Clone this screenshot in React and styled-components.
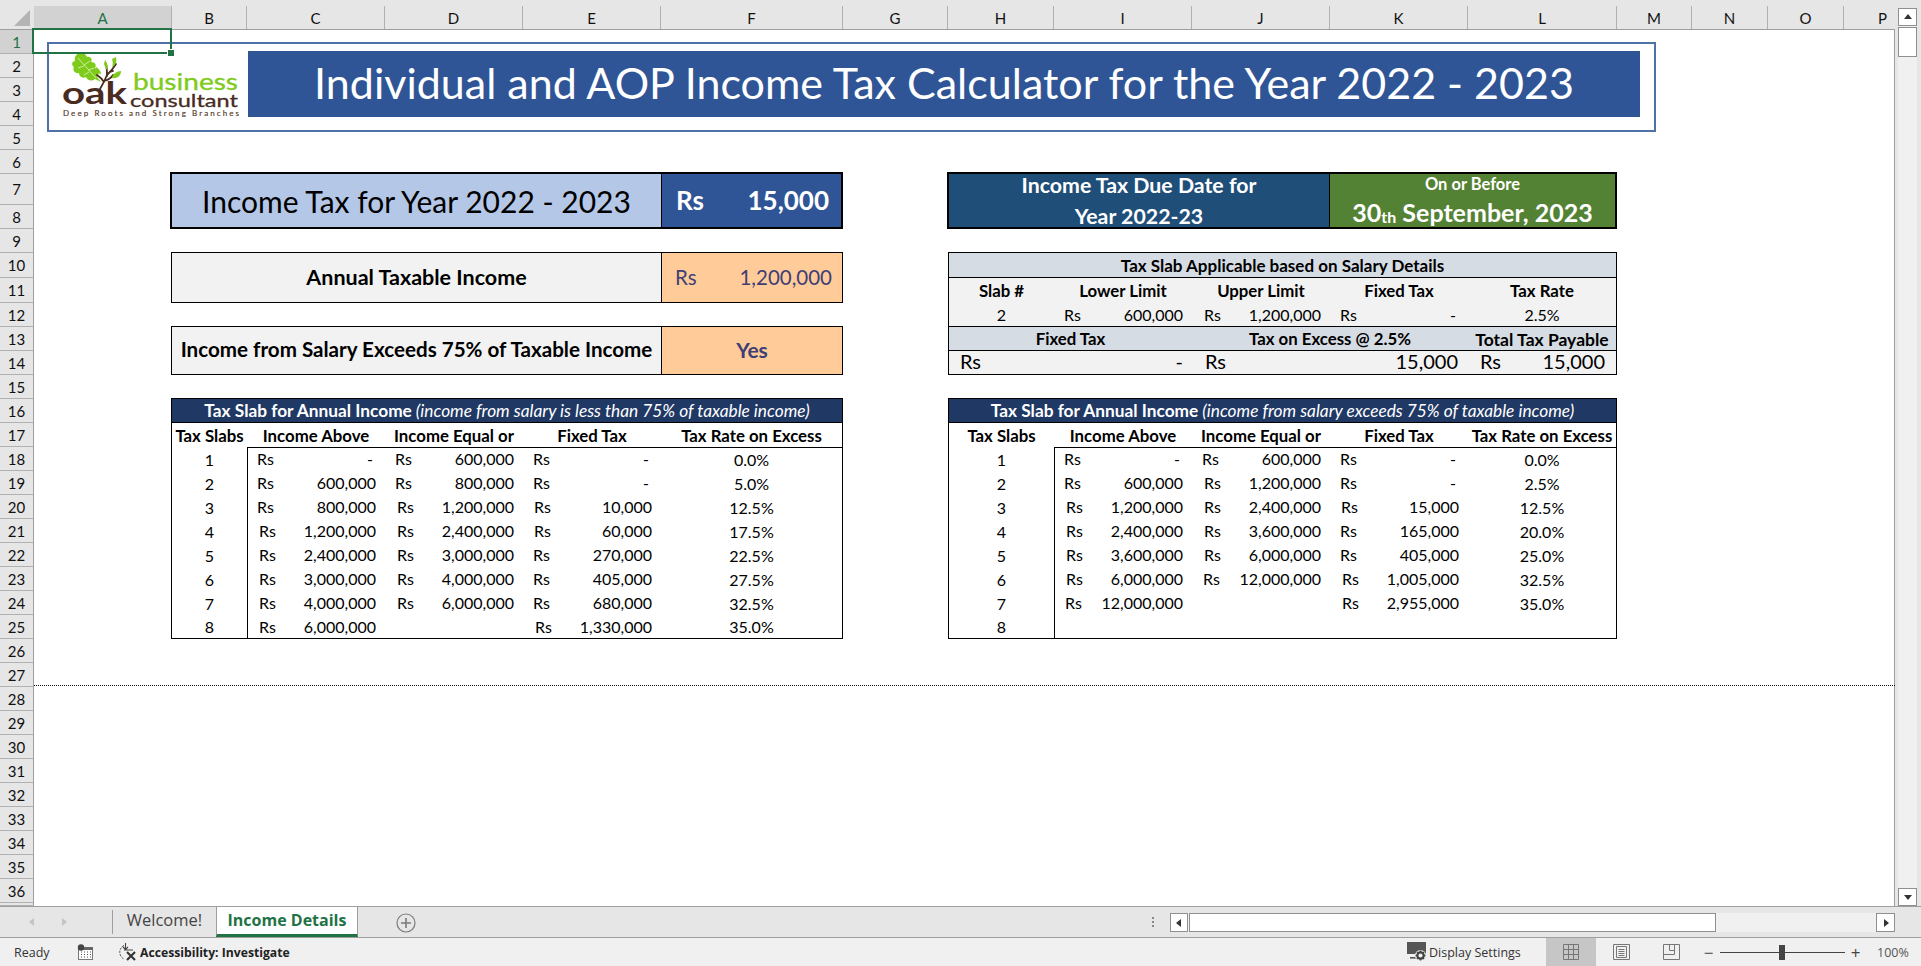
import React from "react";
import styled, { createGlobalStyle } from "styled-components";

const GlobalStyle = createGlobalStyle`
  html, body { margin: 0; padding: 0; background: #fff; overflow: hidden; }
  #root { width: 1921px; height: 966px; }
  * { box-sizing: border-box; }
`;

const cellFont = `Lato, "Liberation Sans", sans-serif`;
const uiFont = `"Open Sans", "Noto Sans", sans-serif`;

const Window = styled.div`
  width: 1921px; height: 966px; display: flex; flex-direction: column;
  font-family: ${cellFont}; color: #000; overflow: hidden; background: #fff;
`;
const Main = styled.div`display: flex; height: 906px;`;

const Sheet = styled.div`
  display: grid; width: 1895px; height: 906px; background: #fff;
  border-right: 1px solid #9e9e9e;
  grid-template-columns: 34px 138px 75px 138px 138px 138px 182px 105px 106px 138px 138px 138px 149px 75px 76px 76px 51px;
  grid-template-rows: 30px repeat(6, 24px) 31px 24px 24px 25px 25px 24px 24px 24px 24px 24px 24px repeat(8, 24px) 24px 24px repeat(9, 24px) 3px;
`;
const HeaderBand = styled.div`
  grid-column: 1 / -1; grid-row: 1; background: #e6e6e6; border-bottom: 1px solid #9e9e9e;
`;
const Corner = styled.div`
  grid-column: 1; grid-row: 1; width: 16px; height: 16px; margin: 10px 0 0 14px;
  background: #b4b4b4; clip-path: polygon(100% 0, 100% 100%, 0 100%);
`;
const ColHead = styled.div`
  grid-column: ${p => p.$col}; grid-row: 1; margin-top: 6px; height: 23px;
  display: flex; align-items: center; justify-content: center;
  font-size: 15px; padding: 1px 0 0 ${p => (p.$last ? 27 : 0)}px;
  background: ${p => (p.$active ? "#d2d2d2" : "transparent")};
  color: ${p => (p.$active ? "#217346" : "#111")};
  border-right: 1px solid ${p => (p.$last ? "transparent" : "#b1b1b1")};
`;
const RowHead = styled.div`
  grid-column: 1; grid-row: ${p => p.$row}; display: flex; align-items: center; justify-content: center;
  font-size: 15px; overflow: hidden;
  background: ${p => (p.$active ? "#d2d2d2" : "#e6e6e6")};
  color: ${p => (p.$active ? "#217346" : "#111")};
  border-right: 1px solid #9e9e9e; border-bottom: 1px solid #b1b1b1;
`;
const Selection = styled.div`
  grid-column: 2; grid-row: 2; margin: -2px 0 0 -2px; border: 2px solid #217346;
  position: relative; z-index: 5;
`;
const Handle = styled.span`
  position: absolute; right: -4px; bottom: -4px; width: 6px; height: 6px;
  background: #217346; outline: 1px solid #fff;
`;
const PageBreak = styled.div`
  grid-column: 2 / -1; grid-row: 28; margin-bottom: 1px; border-bottom: 1px dotted #111;
`;

const TitleFrame = styled.div`
  grid-column: 2 / 15; grid-row: 2 / 7; margin: 12px 36px 18px 13px;
  border: 2px solid #4f71a9; padding: 7px 14px 13px 11px; background: #fff;
  display: flex; gap: 8px;
`;
const Banner = styled.div`
  flex: 1; background: #2f5597; color: #fff; display: flex; align-items: center; justify-content: center;
  font-size: 43px; padding-bottom: 3px;
`;

const Box = styled.div`
  grid-column: ${p => p.$col}; grid-row: ${p => p.$row};
  display: grid; grid-template-columns: ${p => p.$cols}; grid-template-rows: minmax(0, 1fr);
  border: ${p => (p.$thick ? "2px" : "1px")} solid #000;
  margin: ${p => p.$margin};
  z-index: 1; overflow: hidden;
`;
const Cell = styled.div`
  display: flex; align-items: center; justify-content: ${p => p.$justify || "center"};
  background: ${p => p.$bg}; color: ${p => p.$color || "#000"};
  font-size: ${p => p.$size}px; font-weight: ${p => (p.$bold ? 700 : 400)};
  padding: ${p => p.$pad || "0 0 2px"}; min-width: 0; white-space: nowrap;
  border-left: ${p => (p.$divider ? "1px solid #000" : "none")};
`;
const DueCell = styled.div`
  display: flex; flex-direction: column; align-items: center; justify-content: center;
  background: ${p => p.$bg}; color: #fff; font-weight: 700; white-space: nowrap; min-height: 0;
  padding-top: ${p => p.$top || 0}px;
  border-left: ${p => (p.$divider ? "1px solid #000" : "none")};
`;
const DueLine = styled.div`font-size: ${p => p.$size}px; line-height: ${p => p.$line}px; flex: none;`;
const Ordinal = styled.span`font-size: 16px; vertical-align: -1px;`;

const Panel = styled.div`
  grid-column: 9 / 14; grid-row: 11 / 16; margin: -1px 0 0 0; border: 1px solid #000;
  background: #f2f2f2; display: grid; overflow: hidden;
  grid-template-columns: 105px 138px 138px 138px 1fr;
  grid-template-rows: 25px 25px 24px 24px 23px;
`;
const PanelTitle = styled.div`
  grid-column: 1 / -1; background: #d6dce4; border-bottom: 1px solid #000;
  display: flex; align-items: center; justify-content: center; font-size: 17px; font-weight: 700;
`;
const PanelHead = styled.div`
  display: flex; align-items: center; justify-content: center; white-space: nowrap;
  font-size: ${p => p.$size || 16.8}px; font-weight: 700;
  grid-column: ${p => (p.$span ? `span ${p.$span}` : "auto")};
  ${p => p.$band && "background: #d6dce4; border-bottom: 1px solid #000;"}
  ${p => p.$low && "padding-top: 2px;"}
`;
const Plain = styled.div`
  display: flex; align-items: center; justify-content: center; font-size: 16px;
  ${p => p.$under && "border-bottom: 1px solid #000;"}
`;
const Money = styled.div`
  display: flex; align-items: center; justify-content: space-between; min-width: 0;
  font-size: ${p => p.$size || 16}px;
  grid-column: ${p => (p.$span ? `span ${p.$span}` : "auto")};
  padding: ${p => p.$pad || "0 9px 0 10px"};
  ${p => p.$under && "border-bottom: 1px solid #000;"}
`;
const Dash = styled.span`padding-right: 3px;`;

const SlabTable = styled.div`
  grid-column: ${p => p.$col}; grid-row: 17 / 27; margin: ${p => p.$margin}; border: 1px solid #000;
  display: grid; overflow: hidden; z-index: 1;
  grid-template-columns: ${p => p.$first}px 138px 138px 138px 1fr;
  grid-template-rows: 24px 24px repeat(7, 24px) 23px;
`;
const TableTitle = styled.div`
  grid-column: 1 / -1; background: #203864; color: #fff; border-bottom: 1px solid #000;
  display: flex; align-items: center; justify-content: center; gap: 4px; font-size: 17.3px; white-space: nowrap;
`;
const Strong = styled.b`font-weight: 700;`;
const Aside = styled.i`font-style: italic;`;
const ColTitle = styled.div`
  display: flex; align-items: center; justify-content: center; font-size: 16.8px; font-weight: 700; white-space: nowrap;
`;
const SlabColumn = styled.div`
  grid-column: 1; grid-row: 3 / -1; display: grid; grid-template-rows: subgrid;
`;
const SlabBody = styled.div`
  grid-column: 2 / -1; grid-row: 3 / -1; display: grid;
  grid-template-columns: subgrid; grid-template-rows: subgrid;
  box-shadow: inset 1px 1px 0 #000;
`;

/* workbook chrome */
const VScroll = styled.div`
  width: 26px; height: 906px; background: #e6e6e6; padding: 8px 4px 0 3px; display: flex;
`;
const VTrack = styled.div`
  flex: 1; background: #f0f0f0; display: flex; flex-direction: column;
`;
const ScrollBtn = styled.div`
  width: ${p => p.$w}px; height: ${p => p.$h}px; background: #fff; border: 1px solid #8f8f8f;
  display: flex; align-items: center; justify-content: center; flex: none;
`;
const VThumb = styled.div`
  width: 100%; height: 30px; margin-top: 1px; background: #fff; border: 1px solid #8f8f8f;
`;
const VGap = styled.div`flex: 1;`;

const TabBar = styled.div`
  height: 32px; background: #e6e6e6; border-top: 1px solid #9e9e9e; border-bottom: 1px solid #9e9e9e;
  display: flex; align-items: stretch; font-family: ${uiFont};
`;
const NavArrows = styled.div`
  width: 113px; display: flex; align-items: center; gap: 24px; padding-left: 28px;
  position: relative;
  &::after { content: ""; position: absolute; right: 0; top: 3px; bottom: 3px; width: 1px; background: #9e9e9e; }
`;
const TabItem = styled.div`
  display: flex; align-items: center; justify-content: center; white-space: nowrap;
  width: ${p => p.$w}px; font-size: ${p => (p.$active ? 16 : 16.5)}px; margin-top: -1px;
  padding-bottom: ${p => (p.$active ? 1 : 5)}px;
  font-weight: ${p => (p.$active ? 700 : 400)};
  color: ${p => (p.$active ? "#217346" : "#444")};
  background: ${p => (p.$active ? "#fff" : "transparent")};
  border-left: ${p => (p.$active ? "1px solid #9e9e9e" : "0")};
  border-right: ${p => (p.$active ? "1px solid #9e9e9e" : "0")};
  border-top: ${p => (p.$active ? "1px solid #9e9e9e" : "0")};
  border-bottom: ${p => (p.$active ? "3px solid #217346" : "0")};
`;
const AddSheet = styled.div`
  margin: 6px 0 0 38px; width: 20px; height: 20px; color: #777;
`;
const TabGap = styled.div`flex: 1;`;
const SplitDots = styled.div`
  width: 20px; margin-right: 7px; display: flex; flex-direction: column; align-items: center; justify-content: center; gap: 2px;
`;
const Dot = styled.span`width: 2px; height: 2px; background: #8a8a8a;`;
const HScroll = styled.div`
  width: 725px; height: 19px; margin: 6px 26px 0 0; display: flex; background: #f0f0f0;
`;
const HThumb = styled.div`
  width: 527px; background: #fff; border: 1px solid #8f8f8f; margin-left: 1px;
`;

const StatusBar = styled.div`
  height: 28px; background: #f0f0f0; display: flex; align-items: center;
  font-family: ${uiFont}; font-size: 12.5px; color: #333;
`;
const Ready = styled.span`margin-left: 14px; width: 63px;`;
const StatusIcon = styled.span`display: flex; align-items: center; margin-right: ${p => p.$gap || 0}px;`;
const A11y = styled.b`font-weight: 700; color: #222; margin-left: 3px; font-size: 12.2px;`;
const StatusGap = styled.div`flex: 1;`;
const DisplaySettings = styled.span`margin: 0 25px 0 2px; width: 92px; white-space: nowrap;`;
const ViewBtn = styled.div`
  width: 50px; height: 28px; display: flex; align-items: center; justify-content: center;
  background: ${p => (p.$active ? "#c6c6c6" : "transparent")};
`;
const Zoomer = styled.div`
  display: flex; align-items: center; margin-left: 7px; width: 158px; color: #555;
`;
const Sign = styled.span`font-size: 17px; width: 11px; text-align: center; line-height: 1; color: #444;`;
const SliderTrack = styled.div`
  flex: 1; height: 1px; background: #444; margin: 0 5px 0 6px; position: relative;
`;
const SliderThumb = styled.span`
  position: absolute; left: 59px; top: -7px; width: 6px; height: 15px; background: #444;
`;
const Percent = styled.span`width: 44px; margin-left: 16px; color: #555;`;

const LEAF = "#7ecb1c";
const BARK = "#4a2b1f";

const Logo = () => (
  <svg width="180" height="68" viewBox="0 0 180 68" style={{ flex: "none" }}>
    <path d="M20 2C24 1 26 4 27 6C30 5 33 8 31 11C35 11 37 14 35 17C39 19 40 23 37 26L41 31L35 28C31 31 27 29 26 26C22 28 19 25 19 22C15 23 12 19 14 16C11 14 12 10 15 10C14 6 16 3 20 2Z" fill={LEAF} />
    <path d="M18 7L36 27M24 14L30 10M28 19L34 17M24 15L18 17M29 21L24 24" stroke="#d6f2a8" strokeWidth="0.9" fill="none" />
    <g fontFamily="Lato, sans-serif">
      <text x="2" y="53" fontSize="31" fontWeight="700" fill={BARK} textLength="65" lengthAdjust="spacingAndGlyphs">oak</text>
      <text x="73" y="39" fontSize="23" fill={LEAF} stroke={LEAF} strokeWidth="0.3" textLength="105" lengthAdjust="spacingAndGlyphs">business</text>
      <text x="70" y="56" fontSize="18" fill={BARK} stroke={BARK} strokeWidth="0.3" textLength="108" lengthAdjust="spacingAndGlyphs">consultant</text>
      <text x="3" y="65" fontSize="8" fill="#54372a" stroke="#54372a" strokeWidth="0.15" textLength="176">Deep Roots and Strong Branches</text>
    </g>
    <path d="M40 38C43 33 45 29 47 24M47 24C50 21 53 18 56 13M47 25C47 21 47 17 46 13M44 31C42 28 40 26 37 24M44 30C48 29 51 27 53 24M50 21L53 20" stroke={BARK} strokeWidth="1.8" fill="none" strokeLinecap="round" />
    <path d="M44 13C45 16 46 18 47 19C48 16 48 13 45 9Z" fill={LEAF} />
    <path d="M52 8C53 11 53 14 52 16C56 14 57 11 56 6Z" fill={LEAF} />
    <path d="M52 27C52 24 56 20 61 20C61 25 57 28 52 27Z" fill={LEAF} />
    <path d="M36 16C38 17 41 20 41 23C38 23 36 20 36 16Z" fill={LEAF} />
  </svg>
);

const Triangle = ({ dir, color = "#333", size = 8 }) => {
  const pts = { up: "0,6 4,1 8,6", down: "0,2 8,2 4,7", left: "6,0 6,8 1,4", right: "2,0 2,8 7,4" }[dir];
  return (
    <svg width={size} height={size} viewBox="0 0 8 8"><polygon points={pts} fill={color} /></svg>
  );
};

const AddIcon = () => (
  <svg width="20" height="20" viewBox="0 0 20 20" fill="none" stroke="#7a7a7a" strokeWidth="1.2">
    <circle cx="10" cy="10" r="9" />
    <path d="M10 5v10M5 10h10" strokeWidth="1.6" />
  </svg>
);
const MacroIcon = () => (
  <svg width="16" height="16" viewBox="0 0 16 16">
    <rect x="1.5" y="3.5" width="14" height="12" fill="#fff" stroke="#777" />
    <rect x="1" y="3" width="15" height="3" fill="#666" />
    <circle cx="4" cy="3.5" r="3.2" fill="#444" />
    <path d="M4 8h1M7 8h1M10 8h1M13 8h1M4 10.5h1M7 10.5h1M10 10.5h1M13 10.5h1M4 13h1M7 13h1M10 13h1M13 13h1" stroke="#555" />
  </svg>
);
const AccessibilityIcon = () => (
  <svg width="20" height="20" viewBox="0 0 20 20" fill="none" stroke="#444">
    <path d="M7 3.5A7.5 7.5 0 0 0 7 17" strokeDasharray="2.2 1.2" />
    <path d="M8.5 1v6M6 5l2.5 2.5L11 5M7 8h9" strokeWidth="1.1" />
    <path d="M10 10l8 8M18 10l-8 8" stroke="#333" strokeWidth="2.1" />
  </svg>
);
const DisplayIcon = () => (
  <svg width="20" height="20" viewBox="0 0 20 20">
    <rect x="0" y="0" width="19" height="12" fill="#555" />
    <rect x="3" y="15" width="7" height="1.6" fill="#555" />
    <circle cx="13.5" cy="13.5" r="5.5" fill="#f0f0f0" />
    <circle cx="13.5" cy="13.5" r="3.2" fill="none" stroke="#444" strokeWidth="2.2" />
    <path d="M13.5 8.5v2M13.5 16.5v2M8.5 13.5h2M16.5 13.5h2M10 10l1.4 1.4M15.6 15.6L17 17M17 10l-1.4 1.4M11.4 15.6L10 17" stroke="#444" strokeWidth="1.6" />
  </svg>
);
const GridViewIcon = () => (
  <svg width="16" height="16" viewBox="0 0 16 16" fill="none" stroke="#767676">
    <path d="M.5.5h15v15H.5zM.5 5.5h15M.5 10.5h15M5.5.5v15M10.5.5v15" />
  </svg>
);
const PageIcon = () => (
  <svg width="17" height="16" viewBox="0 0 17 16" fill="none" stroke="#767676">
    <path d="M.5.5h16v15H.5zM3.5 2.5h10v11h-10z" />
    <path d="M5.5 5.5h6M5.5 7.5h6M5.5 9.5h6M5.5 11.5h6" />
  </svg>
);
const BreakIcon = () => (
  <svg width="17" height="16" viewBox="0 0 17 16" fill="none" stroke="#767676">
    <path d="M.5.5h16v15H.5zM.5 10.5h11V.5M6.5.5v6h5" />
  </svg>
);

const COLS = ["A","B","C","D","E","F","G","H","I","J","K","L","M","N","O","P"];
const ROW_COUNT = 37;

const LEFT_ROWS = [
  ["-", "600,000", "-", "0.0%"],
  ["600,000", "800,000", "-", "5.0%"],
  ["800,000", "1,200,000", "10,000", "12.5%"],
  ["1,200,000", "2,400,000", "60,000", "17.5%"],
  ["2,400,000", "3,000,000", "270,000", "22.5%"],
  ["3,000,000", "4,000,000", "405,000", "27.5%"],
  ["4,000,000", "6,000,000", "680,000", "32.5%"],
  ["6,000,000", null, "1,330,000", "35.0%"],
];
const RIGHT_ROWS = [
  ["-", "600,000", "-", "0.0%"],
  ["600,000", "1,200,000", "-", "2.5%"],
  ["1,200,000", "2,400,000", "15,000", "12.5%"],
  ["2,400,000", "3,600,000", "165,000", "20.0%"],
  ["3,600,000", "6,000,000", "405,000", "25.0%"],
  ["6,000,000", "12,000,000", "1,005,000", "32.5%"],
  ["12,000,000", null, "2,955,000", "35.0%"],
  [null, null, null, null],
];

const rsPad = v => ({ 6: 11, 9: 12, 10: 11 }[v.length] || 10);

const Amount = ({ value }) =>
  value === null ? <div /> : (
    <Money $pad={`0 9px 1px ${rsPad(value)}px`}>
      <span>Rs</span>
      {value === "-" ? <Dash>-</Dash> : <span>{value}</span>}
    </Money>
  );

const Table = ({ col, first, margin, aside, rows }) => (
  <SlabTable $col={col} $first={first} $margin={margin}>
    <TableTitle><Strong>Tax Slab for Annual Income</Strong><Aside>{aside}</Aside></TableTitle>
    {["Tax Slabs", "Income Above", "Income Equal or", "Fixed Tax", "Tax Rate on Excess"].map(t => (
      <ColTitle key={t}>{t}</ColTitle>
    ))}
    <SlabColumn>
      {rows.map((_, i) => <Plain key={i}>{i + 1}</Plain>)}
    </SlabColumn>
    <SlabBody>
      {rows.map((r, i) => (
        <React.Fragment key={i}>
          <Amount value={r[0]} />
          <Amount value={r[1]} />
          <Amount value={r[2]} />
          {r[3] ? <Plain>{r[3]}</Plain> : <div />}
        </React.Fragment>
      ))}
    </SlabBody>
  </SlabTable>
);

export default function App() {
  return (
    <Window>
      <GlobalStyle />
      <Main>
        <Sheet>
          <HeaderBand />
          <Corner />
          {COLS.map((c, i) => (
            <ColHead key={c} $col={i + 2} $active={c === "A"} $last={c === "P"}>{c}</ColHead>
          ))}
          {Array.from({ length: ROW_COUNT }, (_, i) => (
            <RowHead key={i} $row={i + 2} $active={i === 0}>{i < 36 ? i + 1 : ""}</RowHead>
          ))}

          <TitleFrame>
            <Logo />
            <Banner>Individual and AOP Income Tax Calculator for the Year 2022 - 2023</Banner>
          </TitleFrame>
          <Selection><Handle /></Selection>

          <Box $thick $margin="-2px 0 0 -2px" $col="3 / 8" $row="8 / 10" $cols="1fr 180px">
            <Cell $bg="#b4c7e7" $size={30} $pad="0">Income Tax for Year 2022 - 2023</Cell>
            <Cell $bg="#2f5597" $color="#fff" $size={26} $bold $justify="space-between" $pad="0 12px 2px 14px" $divider>
              <span>Rs</span><span>15,000</span>
            </Cell>
          </Box>
          <Box $margin="-1px 0 0 -1px" $col="3 / 8" $row="11 / 13" $cols="1fr 181px">
            <Cell $bg="#f2f2f2" $size={21.5} $bold>Annual Taxable Income</Cell>
            <Cell $bg="#ffcc99" $color="#3f3f76" $size={20.5} $justify="space-between" $pad="0 10px 2px 13px" $divider>
              <span>Rs</span><span>1,200,000</span>
            </Cell>
          </Box>
          <Box $margin="-1px 0 0 -1px" $col="3 / 8" $row="14 / 16" $cols="1fr 181px">
            <Cell $bg="#f2f2f2" $size={20.6} $bold $pad="0 0 3px">Income from Salary Exceeds 75% of Taxable Income</Cell>
            <Cell $bg="#ffcc99" $color="#3f3f76" $size={21} $bold $pad="0 0 3px" $divider>Yes</Cell>
          </Box>

          <Box $thick $margin="-2px 0 0 -1px" $col="9 / 14" $row="8 / 10" $cols="1fr 286px">
            <DueCell $bg="#1f4e79">
              <DueLine $size={21.3} $line={31}>Income Tax Due Date for</DueLine>
              <DueLine $size={21.3} $line={31}>Year 2022-23</DueLine>
            </DueCell>
            <DueCell $bg="#548235" $top={4} $divider>
              <DueLine $size={16.5} $line={24}>On or Before</DueLine>
              <DueLine $size={25} $line={32}>30<Ordinal>th</Ordinal> September, 2023</DueLine>
            </DueCell>
          </Box>

          <Panel>
            <PanelTitle>Tax Slab Applicable based on Salary Details</PanelTitle>
            {["Slab #", "Lower Limit", "Upper Limit", "Fixed Tax", "Tax Rate"].map(t => (
              <PanelHead key={t}>{t}</PanelHead>
            ))}
            <Plain $under>2</Plain>
            <Money $under $pad="0 9px 1px 10px"><span>Rs</span><span>600,000</span></Money>
            <Money $under $pad="0 9px 1px 12px"><span>Rs</span><span>1,200,000</span></Money>
            <Money $under $pad="0 9px 1px 10px"><span>Rs</span><Dash>-</Dash></Money>
            <Plain $under>2.5%</Plain>
            <PanelHead $band $span={2}>Fixed Tax</PanelHead>
            <PanelHead $band $span={2}>Tax on Excess @ 2.5%</PanelHead>
            <PanelHead $band $low $size={17.5}>Total Tax Payable</PanelHead>
            <Money $span={2} $size={20} $pad="0 6px 3px 11px"><span>Rs</span><Dash>-</Dash></Money>
            <Money $span={2} $size={20} $pad="0 10px 3px 13px"><span>Rs</span><span>15,000</span></Money>
            <Money $size={20} $pad="0 11px 3px 12px"><span>Rs</span><span>15,000</span></Money>
          </Panel>

          <Table col="3 / 8" first={75} margin="-1px 0 0 -1px" aside="(income from salary is less than 75% of taxable income)" rows={LEFT_ROWS} />
          <Table col="9 / 14" first={105} margin="-1px 0 0 0" aside="(income from salary exceeds 75% of taxable income)" rows={RIGHT_ROWS} />

          <PageBreak />
        </Sheet>
        <VScroll>
          <VTrack>
            <ScrollBtn $w={19} $h={18}><Triangle dir="up" /></ScrollBtn>
            <VThumb />
            <VGap />
            <ScrollBtn $w={19} $h={18}><Triangle dir="down" /></ScrollBtn>
          </VTrack>
        </VScroll>
      </Main>

      <TabBar>
        <NavArrows>
          <Triangle dir="left" color="#c4c4c4" />
          <Triangle dir="right" color="#c4c4c4" />
        </NavArrows>
        <TabItem $w={103}>Welcome!</TabItem>
        <TabItem $active $w={142}>Income Details</TabItem>
        <AddSheet><AddIcon /></AddSheet>
        <TabGap />
        <SplitDots><Dot /><Dot /><Dot /></SplitDots>
        <HScroll>
          <ScrollBtn $w={18} $h={19}><Triangle dir="left" /></ScrollBtn>
          <HThumb />
          <VGap />
          <ScrollBtn $w={19} $h={19}><Triangle dir="right" /></ScrollBtn>
        </HScroll>
      </TabBar>

      <StatusBar>
        <Ready>Ready</Ready>
        <StatusIcon $gap={24}><MacroIcon /></StatusIcon>
        <StatusIcon><AccessibilityIcon /></StatusIcon>
        <A11y>Accessibility: Investigate</A11y>
        <StatusGap />
        <StatusIcon><DisplayIcon /></StatusIcon>
        <DisplaySettings>Display Settings</DisplaySettings>
        <ViewBtn $active><GridViewIcon /></ViewBtn>
        <ViewBtn><PageIcon /></ViewBtn>
        <ViewBtn><BreakIcon /></ViewBtn>
        <Zoomer>
          <Sign>−</Sign>
          <SliderTrack><SliderThumb /></SliderTrack>
          <Sign>+</Sign>
        </Zoomer>
        <Percent>100%</Percent>
      </StatusBar>
    </Window>
  );
}
